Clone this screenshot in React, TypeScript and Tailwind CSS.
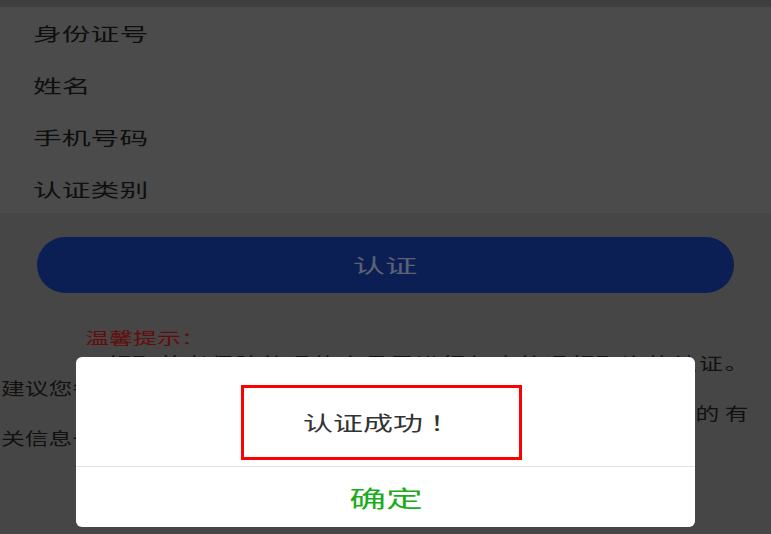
import React from 'react'

const font = { fontFamily: '"Noto Sans CJK SC", "Noto Sans", sans-serif' }

const fields = ['身份证号', '姓名', '手机号码', '认证类别']

export default function App() {
    return (
        <div className="relative h-[534px] w-[771px] overflow-hidden bg-[#474646]" style={font}>
            {/* page under the dim overlay (photo is stretched sideways, hence scale-x) */}
            <div className="h-[7px] bg-[#3f3f3f]" />
            <div className="h-[206px] bg-[#4b4b4b]">
                {fields.map((f) => (
                    <div key={f} className="flex h-[52px] items-center pl-[33px]">
                        <span className="inline-block origin-left scale-x-[1.6] text-[18px] text-[#0f0f0f]">{f}</span>
                    </div>
                ))}
            </div>
            <div className="px-[37px] pt-[24px]">
                <div className="flex h-[56px] items-center justify-center rounded-full bg-[#0c1f55]">
                    <span className="inline-block scale-x-[1.7] text-[19px] text-[#5c6272]">认证</span>
                </div>
            </div>
            <div className="pt-[31px] text-[17px] leading-[25px] text-[#111]">
                <div className="pl-[85px]">
                    <span className="inline-block origin-left scale-x-[1.5] text-[16px] text-[#640c0c]">温馨提示：</span>
                </div>
                <div className="pl-[85px]">
                    <div className="w-[474px] origin-left scale-x-[1.4] text-justify [text-align-last:justify]">
                        1.领取养老保险待遇的人员需进行年度待遇领取资格认证。
                    </div>
                </div>
                <div className="pl-[1px]">
                    <div className="origin-left scale-x-[1.4]">建议您每年按时完成资格认证，</div>
                </div>
                <div className="pl-[85px]">
                    <div className="w-[474px] origin-left scale-x-[1.4] text-justify [text-align-last:justify]">
                        2.认证时请确保所填写的身份证号码与社保登记的有
                    </div>
                </div>
                <div className="pl-[1px]">
                    <div className="origin-left scale-x-[1.4]">关信息一致。</div>
                </div>
            </div>

            {/* dialog */}
            <div className="absolute left-[76px] top-[357px] w-[619px] rounded-[6px] bg-white">
                <div className="h-[109px] pl-[165px] pt-[28px]">
                    <div className="flex h-[75px] w-[281px] items-center justify-center border-[3px] border-[#ff0000]">
                        <span className="inline-block scale-x-[1.5] text-[20px] text-[#333]">认证成功 ！</span>
                    </div>
                </div>
                <div className="h-px bg-[#e3e3e3]" />
                <div className="flex h-[60px] items-center justify-center">
                    <span className="inline-block scale-x-[1.6] text-[23px] text-[#1aad19]">确定</span>
                </div>
            </div>
        </div>
    )
}
